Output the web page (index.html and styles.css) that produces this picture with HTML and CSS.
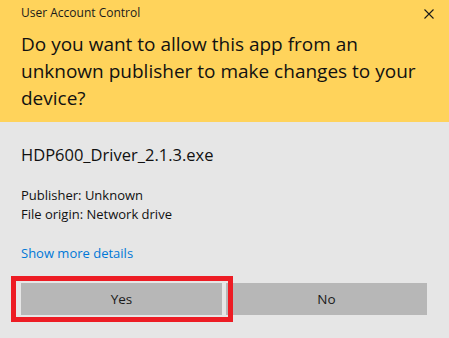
FILE: index.html
```html
<!DOCTYPE html>
<html lang="en">
<head>
  <meta charset="UTF-8">
  <title>User Account Control</title>
  <link rel="stylesheet" href="styles.css">
</head>
<body>
<div class="dialog">
  <div class="header">
    <div class="title-bar">
      <span class="title">User Account Control</span>
      <svg class="close" width="10" height="10" viewBox="0 0 10 10">
        <path d="M0.5 0.5 L9.5 9.5 M9.5 0.5 L0.5 9.5" stroke="#1a1a1a" stroke-width="1.1" fill="none"/>
      </svg>
    </div>
    <h1>Do you want to allow this app from an unknown publisher to make changes to your device?</h1>
  </div>

  <div class="content">
    <div class="filename">HDP600_Driver_2.1.3.exe</div>
    <div class="details">
      <div>Publisher: Unknown</div>
      <div>File origin: Network drive</div>
    </div>
    <a class="more" href="#">Show more details</a>

    <div class="buttons">
      <button type="button" class="btn">Yes</button>
      <button type="button" class="btn">No</button>
      <div class="highlight"></div>
    </div>
  </div>
</div>
</body>
</html>
```

FILE: styles.css
```css
html, body {
  margin: 0;
  height: 100%;
}
body {
  font-family: "Open Sans", "Noto Sans", sans-serif;
  background-color: #e6e6e6;
  color: #000;
}
.dialog {
  width: 449px;
  height: 338px;
  background-color: #e6e6e6;
}
.header {
  background-color: #ffd35b;
  height: 122px;
  box-sizing: border-box;
  padding: 5px 0 0 21px;
}
.title-bar {
  display: flex;
  justify-content: space-between;
  align-items: flex-start;
  padding-right: 15px;
}
.title {
  font-size: 12px;
  line-height: 16px;
  color: #1a1a1a;
}
.close {
  margin-top: 4px;
}
h1 {
  font-weight: normal;
  font-size: 19px;
  line-height: 27px;
  margin: 10px 0 0;
  width: 410px;
  color: #111;
}
.content {
  padding: 22px 0 0 21px;
}
.filename {
  font-size: 16.5px;
  line-height: 22px;
  color: #111;
}
.details {
  font-size: 13px;
  line-height: 19px;
  margin-top: 20px;
  color: #111;
}
.more {
  display: block;
  font-size: 13px;
  line-height: 19px;
  margin-top: 20px;
  color: #0078d7;
  text-decoration: none;
}
.buttons {
  position: relative;
  display: flex;
  gap: 4px;
  margin-top: 20px;
}
.btn {
  width: 201px;
  height: 32px;
  border: none;
  padding: 0;
  background-color: #b7b7b7;
  font-family: inherit;
  font-size: 13.5px;
  line-height: 32px;
  color: #1a1a1a;
}
.highlight {
  position: absolute;
  left: -10px;
  top: -7px;
  width: 222px;
  height: 46px;
  box-sizing: border-box;
  border: 5px solid #ed1c24;
}
```
